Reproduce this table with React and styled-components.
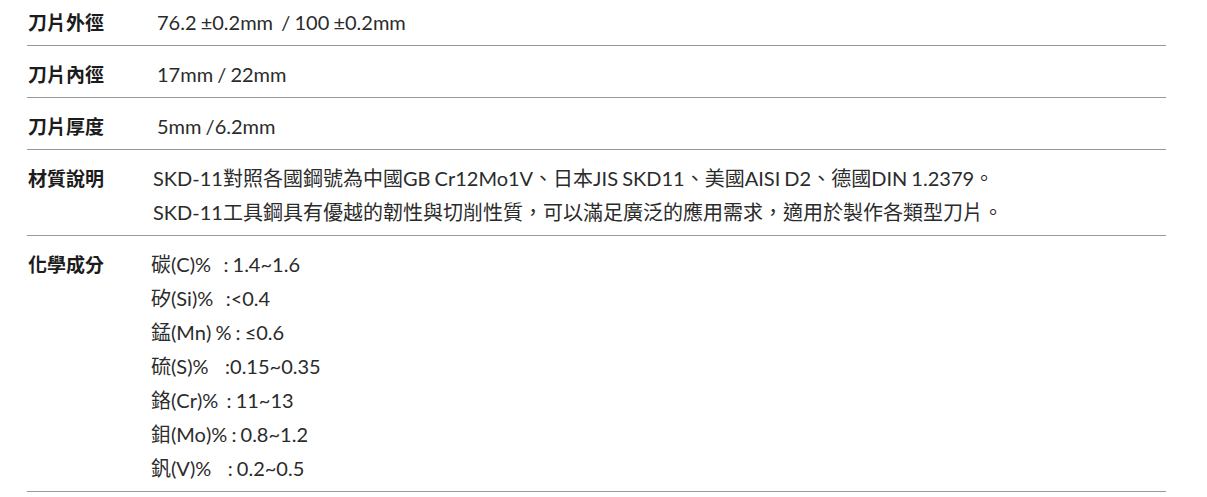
import React from 'react';
import styled, { createGlobalStyle } from 'styled-components';

const GlobalStyle = createGlobalStyle`
   body {
      margin: 0;
      background: #fff;
      font-family: Lato, "Noto Sans CJK TC", sans-serif;
   }
`;

const Table = styled.div`
   width: 1139px;
   margin: -6px 0 0 27px;
`;

const Row = styled.div`
   display: flex;
   padding: 11px 0 6px;
   border-bottom: 1px solid #999;
`;

const Label = styled.div`
   flex: 0 0 123px;
   padding-left: 1px;
   font-family: "Noto Sans CJK TC", sans-serif;
   font-weight: 700;
   font-size: 19px;
   line-height: 34px;
   color: #1c1c1c;
`;

const Value = styled.div`
   display: flex;
   flex-direction: column;
   padding-left: ${(p) => p.indent || 0}px;
   font-family: Lato, "Noto Sans CJK TC", sans-serif;
   font-size: 20px;
   line-height: 34px;
   word-spacing: -1px;
   color: #2b2b2b;
   white-space: pre;
`;

const specs = [
   { label: '刀片外徑', indent: 6, lines: ['76.2 ±0.2mm  / 100 ±0.2mm'] },
   { label: '刀片內徑', indent: 6, lines: ['17mm / 22mm'] },
   { label: '刀片厚度', indent: 6, lines: ['5mm /6.2mm'] },
   {
      label: '材質說明',
      indent: 2,
      lines: [
         'SKD-11對照各國鋼號為中國GB Cr12Mo1V、日本JIS SKD11、美國AISI D2、德國DIN 1.2379。',
         'SKD-11工具鋼具有優越的韌性與切削性質，可以滿足廣泛的應用需求，適用於製作各類型刀片。',
      ],
   },
   {
      label: '化學成分',
      indent: 0,
      lines: [
         '碳(C)%   : 1.4~1.6',
         '矽(Si)%   :<0.4',
         '錳(Mn) % : ≤0.6',
         '硫(S)%    :0.15~0.35',
         '鉻(Cr)%  : 11~13',
         '鉬(Mo)% : 0.8~1.2',
         '釩(V)%    : 0.2~0.5',
      ],
   },
];

const App = () => (
   <>
      <GlobalStyle />
      <Table>
         {specs.map(({ label, indent, lines }) => (
            <Row key={label}>
               <Label>{label}</Label>
               <Value indent={indent}>
                  {lines.map((line) => (
                     <span key={line}>{line}</span>
                  ))}
               </Value>
            </Row>
         ))}
      </Table>
   </>
);

export default App;
